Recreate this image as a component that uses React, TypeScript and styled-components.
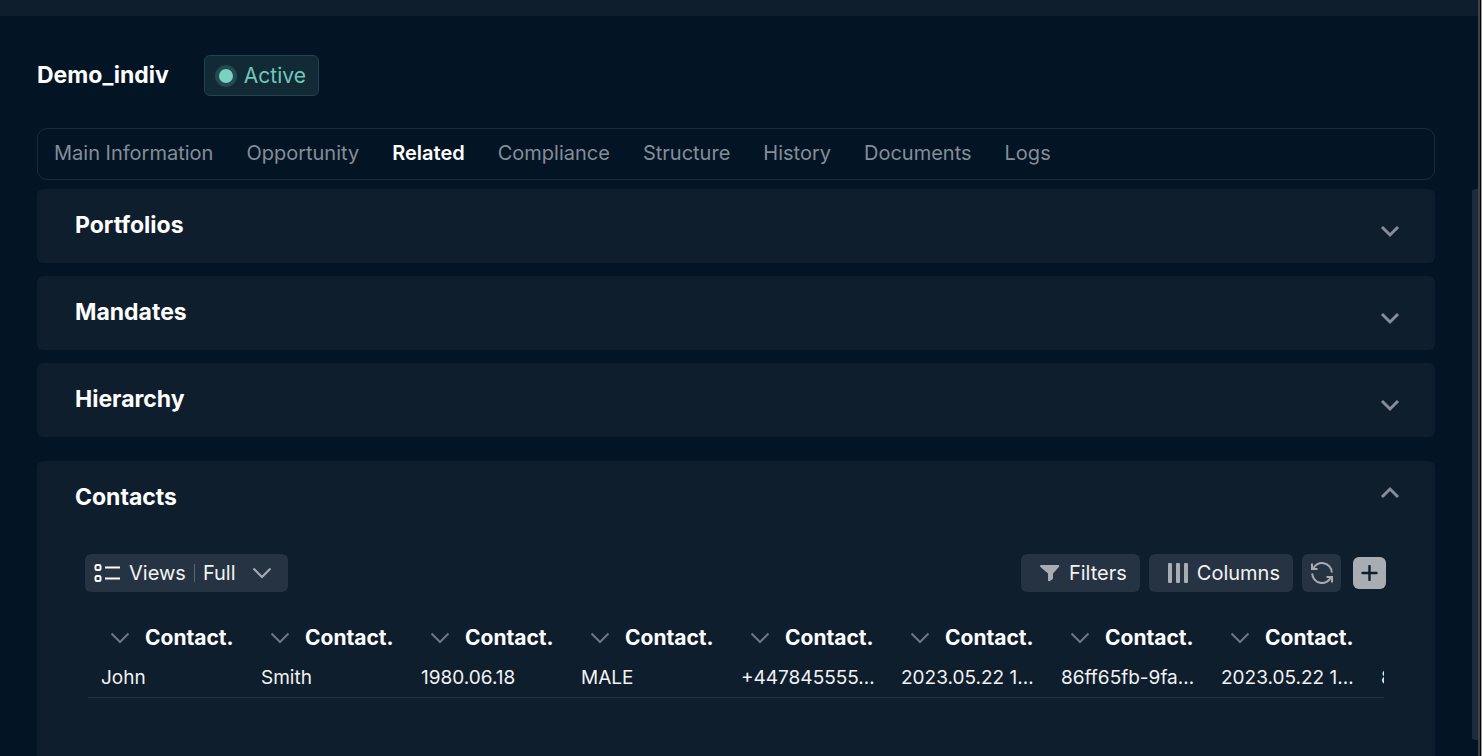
import React, { useState } from "react";
import styled, { createGlobalStyle } from "styled-components";

const GlobalStyle = createGlobalStyle`
  *, *::before, *::after { box-sizing: border-box; }
  html, body, #root { height: 100%; }
  body {
    margin: 0;
    overflow: hidden;
    background: #031424;
    color: #ffffff;
    font-family: Inter, "Open Sans", sans-serif;
    font-size: 20px;
    line-height: 24px;
  }
  button { font: inherit; color: inherit; border: 0; cursor: pointer; }
`;

const Shell = styled.div`
  display: flex;
  height: 100vh;
  overflow: hidden;
`;

const Page = styled.div`
  flex: 1;
  min-width: 0;
  display: flex;
  flex-direction: column;
`;

const TopBar = styled.div`
  flex: none;
  height: 16px;
  background: #0f1e2d;
`;

const Content = styled.main`
  flex: 1;
  min-height: 0;
  display: flex;
  flex-direction: column;
  padding: 39px 37px 0;
`;

const Scroller = styled.div`
  flex: none;
  width: 6px;
  padding-top: 189px;
  background: linear-gradient(#0f1e2d 16px, #031424 16px);
`;

const ScrollThumb = styled.div`
  height: 551px;
  border-radius: 3px 0 0 3px;
  background: #1d2b3a;
`;

const WindowEdge = styled.div`
  flex: none;
  width: 4px;
  background: #3b444d;
  border-right: 1px solid #a59d94;
  box-shadow: inset -1px 0 #000000;
`;

const Header = styled.header`
  display: flex;
  align-items: center;
  gap: 35px;
`;

const Title = styled.h1`
  margin: 0;
  padding-bottom: 2px;
  font-size: 23px;
  font-weight: 700;
  line-height: 28px;
`;

const Status = styled.span`
  display: flex;
  align-items: center;
  gap: 7px;
  height: 41px;
  padding: 0 12px 0 10px;
  border: 1px solid #23444c;
  border-radius: 6px;
  background: #122936;
  color: #6fc8b8;
  font-size: 21px;
`;

const StatusDot = styled.span`
  width: 22px;
  height: 22px;
  border: 4px solid #244951;
  border-radius: 50%;
  background: #79d2c0;
`;

const Tabs = styled.nav`
  display: flex;
  align-items: center;
  gap: 33px;
  height: 52px;
  margin-top: 32px;
  padding: 0 16px 2px;
  border: 1px solid #1c2b3a;
  border-radius: 10px;
`;

const Tab = styled.a<{ $active?: boolean }>`
  color: ${(p) => (p.$active ? "#ffffff" : "#858d99")};
  font-weight: ${(p) => (p.$active ? 600 : 400)};
  text-decoration: none;
  white-space: nowrap;
`;

const Panels = styled.div`
  display: flex;
  flex-direction: column;
  gap: 13px;
  margin-top: 9px;
`;

const Panel = styled.section`
  border-radius: 6px;
  background: #0f1e2d;
`;

const OpenPanel = styled(Panel)`
  flex: 1;
  margin-top: 24px;
  border-radius: 6px 6px 0 0;
`;

const PanelHeading = styled.h2`
  margin: 0;
  font-size: 23px;
  font-weight: 700;
  line-height: 28px;
`;

const PanelToggle = styled.button`
  display: flex;
  align-items: center;
  justify-content: space-between;
  width: 100%;
  height: 74px;
  padding: 0 35px 2px 38px;
  background: none;
  text-align: left;

  svg { margin-top: 11px; }
  &[aria-expanded="true"] svg { margin: 0 0 9px; }
`;

const Toolbar = styled.div`
  display: flex;
  align-items: center;
  gap: 9px;
  margin-top: 19px;
  padding: 0 49px 0 48px;
`;

const ToolButton = styled.button`
  display: flex;
  align-items: center;
  gap: 8px;
  height: 38px;
  padding: 0 13px 0 18px;
  border-radius: 6px;
  background: #263342;
  color: #f2f3f4;
`;

const ViewsButton = styled(ToolButton)`
  margin-right: auto;
  padding: 0 16px 0 9px;
`;

const ViewDivider = styled.span`
  width: 1px;
  height: 18px;
  background: #5b6571;
`;

const CurrentView = styled.span`
  margin-right: 8px;
`;

const RefreshButton = styled(ToolButton)`
  width: 39px;
  padding: 0;
  justify-content: center;
`;

const AddButton = styled.button`
  display: grid;
  place-items: center;
  width: 33px;
  height: 32px;
  margin-left: 3px;
  padding: 0;
  border-radius: 6px;
  background: #a8adb4;
`;

const TableClip = styled.div`
  margin: 23px 51px 0;
  overflow: hidden;
`;

const Table = styled.table`
  width: 1440px;
  table-layout: fixed;
  border-collapse: collapse;
`;

const HeadCell = styled.th`
  height: 46px;
  padding: 0 12px 0 22px;
`;

const HeadInner = styled.div`
  display: flex;
  align-items: center;
  gap: 15px;

  svg { flex: none; }
`;

const HeadText = styled.span`
  white-space: nowrap;
  font-size: 21px;
  font-weight: 700;
`;

const Cell = styled.td`
  height: 36px;
  padding: 0 8px 2px 13px;
  border-bottom: 1px solid #243340;
  white-space: nowrap;
  font-size: 19px;
  color: #f2f3f4;
`;

const Chevron = ({ up = false }: { up?: boolean }) => (
  <svg width="20" height="14" viewBox="0 0 20 14" fill="none" stroke="#858d99" strokeWidth="3" aria-hidden="true">
    <path d={up ? "M2 11l8-8 8 8" : "M2 3l8 8 8-8"} />
  </svg>
);

const ThinChevron = ({ color = "#6d7682" }: { color?: string }) => (
  <svg width="20" height="12" viewBox="0 0 20 12" fill="none" stroke={color} strokeWidth="2" aria-hidden="true">
    <path d="M1.5 1.5L10 10l8.500-8.500" />
  </svg>
);

const ViewsIcon = () => (
  <svg width="27" height="20" viewBox="0 0 27 20" fill="none" stroke="#ffffff" strokeWidth="2" aria-hidden="true">
    <rect x="1.500" y="2" width="5" height="5" rx="1.500" />
    <rect x="1.500" y="13" width="5" height="5" rx="1.500" />
    <path d="M11 4.500h15M11 15.500h15" />
  </svg>
);

const FilterIcon = () => (
  <svg width="22" height="18" viewBox="0 0 22 18" fill="#a8adb4" aria-hidden="true">
    <path d="M2 1h17.500q1.500.5.6 1.800L14 9.500V14q0 1-.8 1.500l-2.700 1.700q-1.500.4-1.500-1V9.500L1.200 2.800Q.6 1.300 2 1z" />
  </svg>
);

const ColumnsIcon = () => (
  <svg width="22" height="20" viewBox="0 0 22 20" fill="#a8adb4" aria-hidden="true">
    <rect x="1" width="4" height="20" rx="1" />
    <rect x="9" width="4" height="20" rx="1" />
    <rect x="17" width="4" height="20" rx="1" />
  </svg>
);

const RefreshIcon = () => (
  <svg width="22" height="22" viewBox="0 0 22 22" fill="none" stroke="#a8adb4" strokeWidth="2" aria-hidden="true">
    <path d="M1 1.500v5.500h5.500M2 7A9.800 9.800 0 0 1 20.800 10.500M21 20.500V15h-5.500M20 15A9.800 9.800 0 0 1 1.200 11.500" />
  </svg>
);

const PlusIcon = () => (
  <svg width="17" height="16" viewBox="0 0 17 16" stroke="#0f1e2d" strokeWidth="2.400" strokeLinecap="round" aria-hidden="true">
    <path d="M8.500 1v14M1.500 8h14" />
  </svg>
);

const tabs = ["Main Information", "Opportunity", "Related", "Compliance", "Structure", "History", "Documents", "Logs"];
const closedPanels = ["Portfolios", "Mandates", "Hierarchy"];
const contact = [
  "John",
  "Smith",
  "1980.06.18",
  "MALE",
  "+447845555…",
  "2023.05.22 1…",
  "86ff65fb-9fa…",
  "2023.05.22 1…",
  "86ff65fb-9fa…",
];

export default function App() {
  const [active, setActive] = useState("Related");

  return (
    <>
      <GlobalStyle />
      <Shell>
        <Page>
          <TopBar />
          <Content>
            <Header>
              <Title>Demo_indiv</Title>
              <Status>
                <StatusDot />
                Active
              </Status>
            </Header>
            <Tabs>
              {tabs.map((t) => (
                <Tab key={t} href="#" $active={t === active} onClick={() => setActive(t)}>
                  {t}
                </Tab>
              ))}
            </Tabs>
            <Panels>
              {closedPanels.map((name) => (
                <Panel key={name}>
                  <PanelToggle aria-expanded="false">
                    <PanelHeading as="span">{name}</PanelHeading>
                    <Chevron />
                  </PanelToggle>
                </Panel>
              ))}
            </Panels>
            <OpenPanel>
              <PanelToggle aria-expanded="true">
                <PanelHeading as="span">Contacts</PanelHeading>
                <Chevron up />
              </PanelToggle>
              <Toolbar>
                <ViewsButton>
                  <ViewsIcon />
                  Views
                  <ViewDivider />
                  <CurrentView>Full</CurrentView>
                  <ThinChevron color="#a8adb4" />
                </ViewsButton>
                <ToolButton>
                  <FilterIcon />
                  Filters
                </ToolButton>
                <ToolButton>
                  <ColumnsIcon />
                  Columns
                </ToolButton>
                <RefreshButton aria-label="Refresh">
                  <RefreshIcon />
                </RefreshButton>
                <AddButton aria-label="Add contact">
                  <PlusIcon />
                </AddButton>
              </Toolbar>
              <TableClip>
                <Table>
                  <thead>
                    <tr>
                      {contact.map((_, i) => (
                        <HeadCell key={i} scope="col">
                          <HeadInner>
                            <ThinChevron />
                            <HeadText>Contact.</HeadText>
                          </HeadInner>
                        </HeadCell>
                      ))}
                    </tr>
                  </thead>
                  <tbody>
                    <tr>
                      {contact.map((value, i) => (
                        <Cell key={i}>{value}</Cell>
                      ))}
                    </tr>
                  </tbody>
                </Table>
              </TableClip>
            </OpenPanel>
          </Content>
        </Page>
        <Scroller>
          <ScrollThumb />
        </Scroller>
        <WindowEdge />
      </Shell>
    </>
  );
}
